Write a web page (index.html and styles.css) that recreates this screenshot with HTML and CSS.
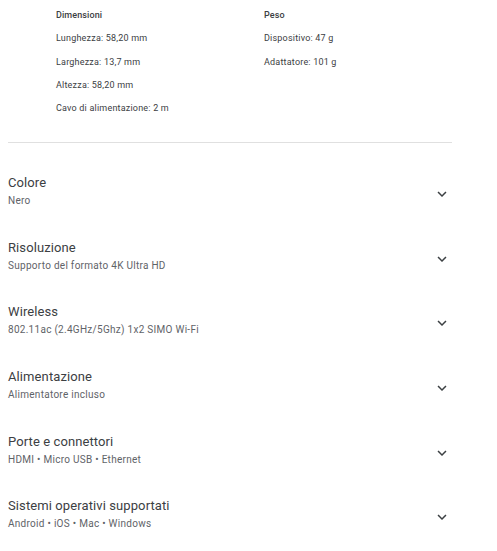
FILE: index.html
```html
<!DOCTYPE html>
<html lang="it">
<head>
<meta charset="utf-8">
<link rel="stylesheet" href="styles.css">
</head>
<body>
<div class="page">
  <div class="specs">
    <div class="spec-col">
      <div class="spec-head">Dimensioni</div>
      <div class="spec-line">Lunghezza: 58,20 mm</div>
      <div class="spec-line">Larghezza: 13,7 mm</div>
      <div class="spec-line">Altezza: 58,20 mm</div>
      <div class="spec-line">Cavo di alimentazione: 2 m</div>
    </div>
    <div class="spec-col">
      <div class="spec-head">Peso</div>
      <div class="spec-line">Dispositivo: 47 g</div>
      <div class="spec-line">Adattatore: 101 g</div>
    </div>
  </div>
  <div class="divider"></div>
  <div class="list">
    <div class="row">
      <div class="row-text"><div class="title">Colore</div><div class="sub">Nero</div></div>
      <svg class="chev" viewBox="0 0 24 24"><path d="M7.41 8.59 12 13.17l4.59-4.58L18 10l-6 6-6-6z"/></svg>
    </div>
    <div class="row">
      <div class="row-text"><div class="title">Risoluzione</div><div class="sub">Supporto del formato 4K Ultra HD</div></div>
      <svg class="chev" viewBox="0 0 24 24"><path d="M7.41 8.59 12 13.17l4.59-4.58L18 10l-6 6-6-6z"/></svg>
    </div>
    <div class="row">
      <div class="row-text"><div class="title">Wireless</div><div class="sub">802.11ac (2.4GHz/5Ghz) 1x2 SIMO Wi-Fi</div></div>
      <svg class="chev" viewBox="0 0 24 24"><path d="M7.41 8.59 12 13.17l4.59-4.58L18 10l-6 6-6-6z"/></svg>
    </div>
    <div class="row">
      <div class="row-text"><div class="title">Alimentazione</div><div class="sub">Alimentatore incluso</div></div>
      <svg class="chev" viewBox="0 0 24 24"><path d="M7.41 8.59 12 13.17l4.59-4.58L18 10l-6 6-6-6z"/></svg>
    </div>
    <div class="row">
      <div class="row-text"><div class="title">Porte e connettori</div><div class="sub">HDMI • Micro USB • Ethernet</div></div>
      <svg class="chev" viewBox="0 0 24 24"><path d="M7.41 8.59 12 13.17l4.59-4.58L18 10l-6 6-6-6z"/></svg>
    </div>
    <div class="row">
      <div class="row-text"><div class="title">Sistemi operativi supportati</div><div class="sub">Android • iOS • Mac • Windows</div></div>
      <svg class="chev" viewBox="0 0 24 24"><path d="M7.41 8.59 12 13.17l4.59-4.58L18 10l-6 6-6-6z"/></svg>
    </div>
  </div>
</div>
</body>
</html>
```
FILE: styles.css
```css
html, body { margin: 0; padding: 0; background: #fff; }
body { font-family: Roboto, "Noto Sans", Arial, sans-serif; color: #3c4043; }
.page { width: 444px; padding: 0 0 0 8px; }
.specs { display: grid; grid-template-columns: 208px 208px; padding: 7px 0 0 48px; }
.spec-head { font-size: 9px; font-weight: 500; color: #3c4043; line-height: 17px; margin-bottom: 6.3px; letter-spacing: 0.1px; }
.spec-line { font-size: 9px; color: #3c4043; line-height: 17px; margin-bottom: 6.3px; letter-spacing: 0.2px; }
.divider { height: 1px; background: #e0e0e0; margin-top: 19px; }
.list { padding-top: 15.5px; }
.row { display: flex; align-items: center; justify-content: space-between; height: 64.6px; }
.row-text { display: flex; flex-direction: column; }
.title { font-size: 13px; line-height: 19px; color: #3c4043; letter-spacing: 0.1px; }
.sub { font-size: 10px; line-height: 16px; margin-top: 1px; color: #5f6368; letter-spacing: 0.28px; }
.chev { width: 18px; height: 18px; fill: #3c4043; margin: 6px 1px 0 0; }
```
